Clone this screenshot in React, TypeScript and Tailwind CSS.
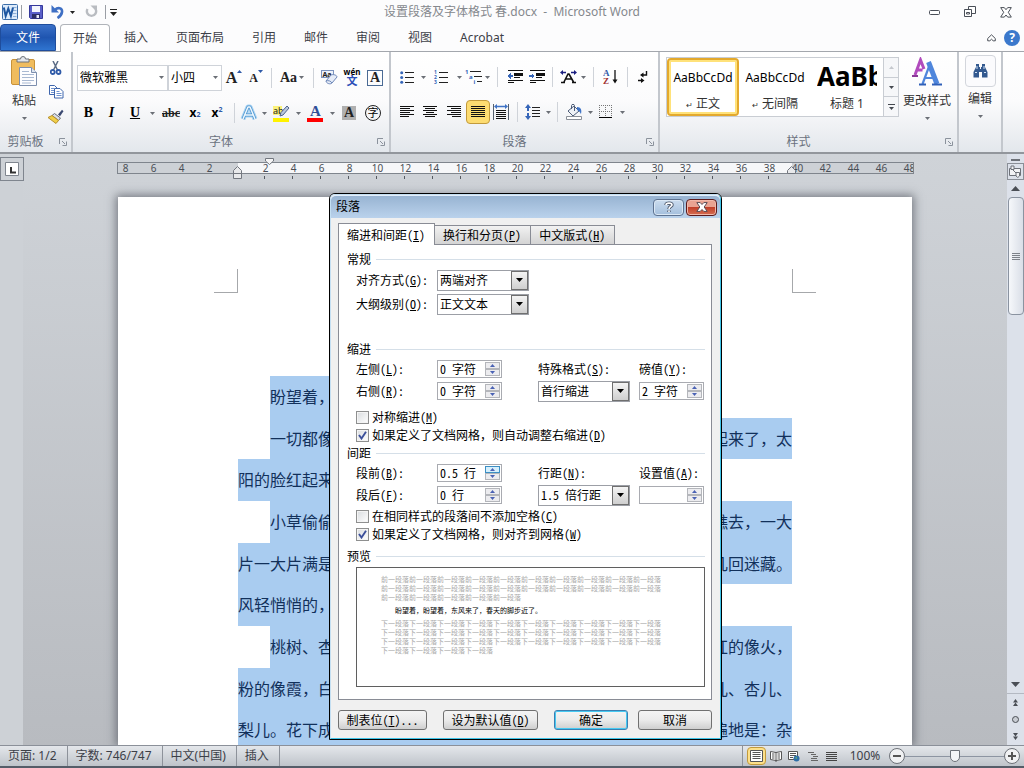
import React from 'react';

const UI_FONT = 'font-["Noto_Sans","Noto_Sans_CJK_SC",sans-serif]';
const DIALOG_FONT = 'font-["Noto_Sans_Mono_CJK_SC","Noto_Sans_CJK_SC",monospace]';

const TABS = ['插入', '页面布局', '引用', '邮件', '审阅', '视图', 'Acrobat'];

const RULER = [8, 6, 4, 2, 0, ...Array.from({ length: 24 }, (_, i) => (i + 1) * 2)];

type Line = { left: string; right?: string; indent?: boolean };

const LINES: Line[] = [
  { left: '盼望着，', indent: true },
  { left: '一切都像', right: '起来了，太', indent: true },
  { left: '阳的脸红起来' },
  { left: '小草偷偷', right: '瞧去，一大', indent: true },
  { left: '片一大片满是', right: '几回迷藏。' },
  { left: '风轻悄悄的，' },
  { left: '桃树、杏', right: '红的像火，', indent: true },
  { left: '粉的像霞，白', right: '儿、杏儿、' },
  { left: '梨儿。花下成', right: '遍地是：杂' },
];

/* ---------- small pieces ---------- */

const Caret: React.FC<{ className?: string }> = ({ className = 'text-[#6b6f76]' }) => (
  <svg width="5" height="3" viewBox="0 0 5 3" className={className} aria-hidden="true">
    <path d="M0 0h5L2.500 3z" fill="currentColor" />
  </svg>
);

const Tool: React.FC<{ label: string; className: string; children: React.ReactNode }> = ({ label, className, children }) => (
  <button type="button" aria-label={label} className={`flex h-6 shrink-0 items-center justify-center ${className}`}>
    {children}
  </button>
);

const Drop: React.FC<{ label: string; wide?: boolean }> = ({ label, wide }) => (
  <button type="button" aria-label={label} className={`flex h-6 shrink-0 items-center justify-center ${wide ? 'w-2.5' : 'w-2'}`}>
    <Caret />
  </button>
);

const Sep: React.FC<{ wide?: boolean }> = ({ wide }) => (
  <span className={`flex h-5 shrink-0 justify-center ${wide ? 'w-3' : 'w-2.5'}`}>
    <span className="w-px bg-[#cfd3d9]" />
  </span>
);

const Group: React.FC<{ title: string; className: string; launcher?: boolean; children: React.ReactNode }> = ({
  title,
  className,
  launcher = true,
  children,
}) => (
  <section className={`flex shrink-0 flex-col border-r-2 border-[#c3c7cd] ${className}`}>
    <div className="min-h-0 flex-1">{children}</div>
    <div className="flex h-5 items-center pr-1 text-xs leading-5 text-[#6a727e]">
      <span className="flex-1 pr-2 text-center">{title}</span>
      {launcher && (
        <button type="button" aria-label={`${title}对话框`}>
          <svg width="8" height="8" viewBox="0 0 8 8" fill="none" stroke="#8b929c">
            <path d="M.5 6V.5H6M3 3l3 3M7.500 3.500v4h-4" />
          </svg>
        </button>
      )}
    </div>
  </section>
);

const Bars: React.FC<{ rows: [number, number][] }> = ({ rows }) => (
  <svg width="15" height="13" viewBox="0 0 15 13" stroke="#111" shapeRendering="crispEdges" aria-hidden="true">
    {rows.map(([a, b], i) => (
      <path key={i} d={`M${a} ${i * 2 + 0.5}H${b}`} />
    ))}
  </svg>
);

/* ---------- title bar ---------- */

const TitleBar: React.FC = () => (
  <header className="grid h-6 grid-cols-[1fr_auto_1fr] items-center bg-[#fcfcfd]">
    <div className="flex items-center pl-0.5">
      <svg width="16" height="16" viewBox="0 0 16 16" aria-hidden="true">
        <rect x=".5" y=".5" width="15" height="15" rx="1" fill="#dceafa" stroke="#3a6ca8" />
        <path d="M11 3.500h3.500M11 6.500h3.500M11 9.500h3.500M11 12.500h3.500" stroke="#8fb0d8" />
        <path d="M1.800 3.500l1.900 8.500 2.600-7.500 2.600 7.500 2.100-8.500" fill="none" stroke="#1c55a0" strokeWidth="2" />
      </svg>
      <span className="ml-[3px] h-3.5 w-px bg-[#9a9ea5]" />
      <button type="button" aria-label="保存" className="ml-[7px]">
        <svg width="14" height="14" viewBox="0 0 14 14">
          <path d="M.5.5h13v13h-12l-1-1z" fill="#5a5fc8" stroke="#34389a" />
          <path d="M3 1h8v6H3z" fill="#f3f5fc" />
          <path d="M3 9h8v4.500H3z" fill="#2c2f66" />
          <path d="M7.500 10h2.500v3H7.500z" fill="#e8eaf6" />
        </svg>
      </button>
      <button type="button" aria-label="撤消" className="ml-2">
        <svg width="14" height="14" viewBox="0 0 14 14" fill="none">
          <path d="M4 5C6.500 2 11.500 2.500 11 7c-.3 2.800-2 4.500-4.500 6" stroke="#3e6fc4" strokeWidth="2.600" />
          <path d="M.5 0v7.500H8z" fill="#3e6fc4" />
        </svg>
      </button>
      <span className="ml-1 p-px"><Caret className="text-[#222]" /></span>
      <button type="button" aria-label="重复" className="ml-2">
        <svg width="14" height="14" viewBox="0 0 14 14" fill="none">
          <path d="M3.500 4a4.600 4.600 0 1 0 8 0" stroke="#b9bcc1" strokeWidth="2.400" />
          <path d="M6.500.5H13V7z" fill="#b9bcc1" />
        </svg>
      </button>
      <span className="ml-[7px] h-3.5 w-px bg-[#9a9ea5]" />
      <button type="button" aria-label="自定义快速访问工具栏" className="ml-1">
        <svg width="7" height="7" viewBox="0 0 7 7">
          <path d="M0 0h7v1H0zM0 3h7L3.500 7z" fill="#222" />
        </svg>
      </button>
    </div>
    <h1 className="whitespace-pre text-xs text-[#85888d]">设置段落及字体格式 春.docx  -  Microsoft Word</h1>
    <div className="flex items-center justify-end gap-6 pr-3 text-[#4a4f58]">
      <button type="button" aria-label="最小化">
        <svg width="11" height="12" viewBox="0 0 11 12" fill="#fff" stroke="currentColor"><rect x=".5" y="4.500" width="10" height="4" rx="1" /></svg>
      </button>
      <button type="button" aria-label="还原">
        <svg width="12" height="12" viewBox="0 0 12 12" fill="#fff" stroke="currentColor">
          <path d="M4.500.500h7v7h-7z" />
          <path d="M.5 3.500h7v7h-7z" />
          <path d="M2.500 6.500h3v1.500h-3z" />
        </svg>
      </button>
      <button type="button" aria-label="关闭">
        <svg width="12" height="11" viewBox="0 0 12 11" fill="#fff" stroke="currentColor">
          <path d="M.7.600h3.600L6 2.700 7.700.600h3.600L8.300 5.300l3 4.800H7.700L6 8l-1.700 2.100H.7l3-4.800z" />
        </svg>
      </button>
    </div>
  </header>
);

const TabRow: React.FC = () => (
  <nav className="flex h-7 items-stretch border-b border-[#a3a7ad] bg-[#fcfcfd] text-xs text-[#3c4048]">
    <button type="button" className="w-14 rounded-t-sm border border-[#1f4d9c] bg-linear-to-b from-[#3a70c8] via-[#1f55b0] to-[#2f74d0] text-white">
      文件
    </button>
    <button type="button" className="-mb-px ml-1 rounded-t border border-b-0 border-[#b0b4ba] bg-white px-3">开始</button>
    {TABS.map((tab) => (
      <button key={tab} type="button" className="px-3.5">{tab}</button>
    ))}
    <div className="ml-auto flex items-center gap-2 pr-1">
      <button type="button" aria-label="功能区最小化">
        <svg width="9" height="8" viewBox="0 0 9 8" fill="#fff" stroke="#4a4f58">
          <path d="M.7 4.500L4.500.800l3.800 3.700v2.300H6.200L4.500 5.200 2.800 6.800H.7z" />
        </svg>
      </button>
      <button type="button" aria-label="帮助" className="size-4 rounded-full bg-[#3b78cc] text-xs font-bold leading-4 text-white">?</button>
    </div>
  </nav>
);

/* ---------- ribbon ---------- */

const Clipboard: React.FC = () => (
  <div className="flex pt-1">
    <button type="button" className="flex w-12 flex-col items-center text-xs text-[#333]">
      <svg width="28" height="31" viewBox="0 0 28 31" aria-hidden="true">
        <rect x="1.500" y="3.500" width="23" height="25" rx="1.500" fill="#f0bc5e" stroke="#c8923a" />
        <path d="M7 6V3h3.500a2.500 2.500 0 0 1 5 0H19v3z" fill="#e4e7ec" stroke="#6c7178" />
        <path d="M9.500 11.500h12l5 5v13h-17z" fill="#fdfdff" stroke="#7d8fae" />
        <path d="M21.500 11.500v5h5" fill="#dce4f0" stroke="#7d8fae" />
        <path d="M12 15.500h7M12 18.500h12M12 21.500h12M12 24.500h12M12 27h9" stroke="#a9b9d2" />
      </svg>
      <span className="mt-1 leading-5">粘贴</span>
      <span className="mt-1.5"><Caret /></span>
    </button>
    <div className="flex flex-col items-center">
      <Tool label="剪切" className="w-4">
        <svg width="12" height="14" viewBox="0 0 12 14" fill="none">
          <path d="M3 0l4.500 9M8 0L3.500 9" stroke="#5a6b86" strokeWidth="1.500" />
          <circle cx="2.700" cy="11" r="2" stroke="#2f5aa8" strokeWidth="1.800" />
          <circle cx="8.500" cy="11" r="2" stroke="#2f5aa8" strokeWidth="1.800" />
        </svg>
      </Tool>
      <Tool label="复制" className="w-4">
        <svg width="15" height="14" viewBox="0 0 15 14" fill="#fff" stroke="#3f66ad">
          <path d="M.5.5h5l2.500 2.500v6.500H.5z" />
          <path d="M2 3.500h3M2 5.500h4M2 7.500h4" stroke="#6f93d0" />
          <path d="M5.500 3.500h5.500l3 3v6.500H5.500z" />
          <path d="M7.500 6.500h3M7.500 8.500h5M7.500 10.500h5" stroke="#6f93d0" />
        </svg>
      </Tool>
      <Tool label="格式刷" className="w-4">
        <svg width="16" height="15" viewBox="0 0 16 15">
          <path d="M10 5.500L14 .800l1.500 1.400-3.500 5z" fill="#3c4a72" />
          <path d="M6.500 4.500l6 4.500-2 2.500-6.500-5z" fill="#d9dde6" stroke="#6b7079" />
          <path d="M4 6.500l6.500 5L8 14.500 0 8.500z" fill="#f0cf4a" stroke="#b8902a" />
        </svg>
      </Tool>
    </div>
  </div>
);

const SERIF = 'font-["Liberation_Serif",serif]';

const FontGroup: React.FC = () => (
  <div className="flex flex-col gap-1.5 pl-1 pt-3">
    <div className="flex items-center">
      <div className="relative">
        <select aria-label="字体" className="h-[26px] w-[91px] appearance-none border border-[#cfd3d9] bg-white pl-0.5 text-xs text-black">
          <option>微软雅黑</option>
        </select>
        <span className="pointer-events-none absolute right-1 top-3"><Caret /></span>
      </div>
      <div className="relative">
        <select aria-label="字号" className="h-[26px] w-[54px] appearance-none border border-[#cfd3d9] bg-white pl-0.5 text-xs text-black">
          <option>小四</option>
        </select>
        <span className="pointer-events-none absolute right-1 top-3"><Caret /></span>
      </div>
      <Tool label="增大字体" className={`w-6 text-base font-bold text-[#222] ${SERIF}`}>
        A<svg width="5" height="3" viewBox="0 0 5 3" className="mb-3"><path d="M0 3h5L2.500 0z" fill="#2f5aa8" /></svg>
      </Tool>
      <Tool label="缩小字体" className={`w-5 text-xs font-bold text-[#222] ${SERIF}`}>
        A<svg width="5" height="3" viewBox="0 0 5 3" className="mb-3"><path d="M0 0h5L2.500 3z" fill="#2f5aa8" /></svg>
      </Tool>
      <Sep />
      <Tool label="更改大小写" className={`w-8 gap-0.5 text-sm font-bold text-[#222] ${SERIF}`}>
        Aa<Caret />
      </Tool>
      <Sep />
      <Tool label="清除格式" className="w-[22px]">
        <svg width="17" height="17" viewBox="0 0 17 17">
          <rect x=".5" y="1.500" width="12" height="7" fill="#eef2fa" stroke="#7c94bf" />
          <text x="1.500" y="7.500" fontSize="7" fontWeight="bold" fill="#222">Aa</text>
          <path d="M5 12l5-6c2-1 6 0 6 2l-5 6c-2 2-6 0-6-2z" fill="#e7edf8" stroke="#6d87b8" />
          <path d="M5 12c2-1 5 0 6 2" fill="none" stroke="#6d87b8" />
        </svg>
      </Tool>
      <Tool label="拼音指南" className="w-6">
        <span className="flex flex-col items-center">
          <span className="text-[8px] font-bold leading-[6px] text-black">wén</span>
          <span className="text-[11px] font-bold leading-[11px] text-[#2b4fb8]">文</span>
        </span>
      </Tool>
      <Tool label="字符边框" className="w-[22px]">
        <span className={`size-4 border border-[#4a6a94] text-sm font-bold leading-[14px] text-[#222] ${SERIF}`}>A</span>
      </Tool>
    </div>
    <div className="flex h-8 items-center">
      <Tool label="加粗" className={`w-[23px] text-sm font-bold text-black ${SERIF}`}>B</Tool>
      <Tool label="倾斜" className={`w-[23px] text-sm font-bold italic text-black ${SERIF}`}>I</Tool>
      <Tool label="下划线" className={`w-6 text-sm font-bold text-black underline ${SERIF}`}>U</Tool>
      <Drop label="下划线样式" wide />
      <Tool label="删除线" className={`w-7 text-xs font-bold text-[#222] line-through ${SERIF}`}>abc</Tool>
      <Tool label="下标" className="w-5 text-xs font-bold text-black">x<sub className="text-[7px] text-[#2f5aa8]">2</sub></Tool>
      <Tool label="上标" className="w-6 text-xs font-bold text-black">x<sup className="text-[7px] text-[#2f5aa8]">2</sup></Tool>
      <Sep />
      <Tool label="文本效果" className="w-5">
        <svg width="18" height="18" viewBox="0 0 18 18" fill="none" strokeLinejoin="round">
          <path d="M3 15L8 3h2l5 12M5 11h8" stroke="#a9d3f2" strokeWidth="5" />
          <path d="M3 15L8 3h2l5 12M5 11h8" stroke="#4b93cf" strokeWidth="3" />
          <path d="M3 15L8 3h2l5 12M5 11h8" stroke="#eef7fd" strokeWidth="1.500" />
        </svg>
      </Tool>
      <Drop label="文本效果选项" wide />
      <Tool label="突出显示" className="w-6">
        <svg width="17" height="17" viewBox="0 0 17 17">
          <path d="M0 1h9v9H0z" fill="#fbf27a" />
          <text x="0" y="8.500" fontSize="9" fill="#222">ab</text>
          <path d="M14 1l2 2-6 7-3 1 1-3.500z" fill="#b9c7de" stroke="#50648c" />
          <path d="M0 13h16v4H0z" fill="#fff200" />
        </svg>
      </Tool>
      <Drop label="突出显示颜色" wide />
      <Tool label="字体颜色" className="w-6">
        <svg width="17" height="18" viewBox="0 0 17 18">
          <text x="3" y="12" fontSize="15" fontWeight="bold" fontFamily="Liberation Serif" fill="#2f4f98">A</text>
          <path d="M0 14h16v4H0z" fill="#f00" />
        </svg>
      </Tool>
      <Drop label="字体颜色选项" wide />
      <Tool label="字符底纹" className="w-6">
        <span className={`size-3.5 bg-[#b0b0b0] text-sm font-bold leading-[14px] text-[#222] ${SERIF}`}>A</span>
      </Tool>
      <Tool label="带圈字符" className="w-6">
        <span className="size-4 rounded-full border border-[#222] text-[11px] leading-[14px] text-black">字</span>
      </Tool>
    </div>
  </div>
);

const FULL: [number, number][] = [[0, 14], [0, 14], [0, 14], [0, 14], [0, 14], [0, 14]];

const IndentIcon: React.FC<{ out?: boolean }> = ({ out }) => (
  <svg width="16" height="14" viewBox="0 0 16 14" fill="none" shapeRendering="crispEdges">
    <path d="M1 .500h15M7 3h9M7 7h6M1 10.500h15M1 12.500h6" stroke="#111" />
    <path d="M7 4.500h9" stroke="#111" strokeWidth="2" />
    <path d={out ? 'M0 6l3.500-3v2H6v2H3.500v2z' : 'M6 6L2.500 3v2H0v2h2.500v2z'} fill="#3565b8" />
  </svg>
);

const ParagraphGroup: React.FC = () => (
  <div className="flex flex-col gap-1.5 pl-1 pt-3">
    <div className="flex h-[26px] items-center">
      <Tool label="项目符号" className="w-6">
        <svg width="14" height="13" viewBox="0 0 14 13">
          <path d="M5 1.500h9M5 6.500h9M5 11.500h9" stroke="#222" />
          <g fill="#3565b8"><circle cx="1.700" cy="1.700" r="1.500" /><circle cx="1.700" cy="6.500" r="1.500" /><circle cx="1.700" cy="11.300" r="1.500" /></g>
        </svg>
      </Tool>
      <Drop label="项目符号库" />
      <Tool label="编号" className="w-7">
        <svg width="15" height="15" viewBox="0 0 15 15">
          <path d="M5 2.500h9M5 7.500h9M5 12.500h9" stroke="#222" />
          <g fill="#3565b8" fontSize="5" fontWeight="bold"><text x="0" y="4.300">1</text><text x="0" y="9.300">2</text><text x="0" y="14.300">3</text></g>
        </svg>
      </Tool>
      <Drop label="编号库" />
      <Tool label="多级列表" className="w-5">
        <svg width="17" height="16" viewBox="0 0 17 16">
          <path d="M5 2.500h11M9 7.500h8M12 12.500h5" stroke="#222" />
          <g fill="#3565b8" fontSize="6" fontWeight="bold"><text x="0" y="4.700">1</text><text x="4" y="9.700">a</text><text x="8.500" y="15">i</text></g>
        </svg>
      </Tool>
      <Drop label="列表库" />
      <Sep wide />
      <Tool label="减少缩进量" className="w-6"><IndentIcon out /></Tool>
      <Tool label="增加缩进量" className="w-5"><IndentIcon /></Tool>
      <Sep />
      <Tool label="中文版式" className="w-[22px]">
        <svg width="17" height="14" viewBox="0 0 17 14" fill="none">
          <path d="M1 12.500h4M12 12.500h4M4 12L8 4h1l4.500 8M6 9h6" stroke="#111" strokeWidth="1.600" />
          <path d="M0 2.500L3 0v1.700h3v1.600H3V5zM17 2.500L14 0v1.700h-3v1.600h3V5z" fill="#1b1f80" />
        </svg>
      </Tool>
      <Drop label="中文版式选项" />
      <Sep wide />
      <Tool label="排序" className="w-[22px]">
        <svg width="15" height="16" viewBox="0 0 15 16">
          <text x="0" y="7" fontSize="9" fontWeight="bold" fontFamily="Liberation Serif" fill="#2f5aa8">A</text>
          <text x="0" y="15" fontSize="9" fontWeight="bold" fontFamily="Liberation Serif" fill="#a03030">Z</text>
          <path d="M12 1v11" stroke="#111" strokeWidth="1.300" />
          <path d="M9.500 10.500h5l-2.500 4z" fill="#111" />
        </svg>
      </Tool>
      <Sep wide />
      <Tool label="显示编辑标记" className="w-5">
        <svg width="12" height="13" viewBox="0 0 12 13" fill="none" stroke="#111" strokeWidth="1.400">
          <path d="M9.500 0v4H5M1 9.500h5" />
          <path d="M6.500 1.500v5L3 4zM4 7v5l3.500-2.500z" fill="#111" stroke="none" />
        </svg>
      </Tool>
    </div>
    <div className="flex h-8 items-center">
      <Tool label="左对齐" className="w-6"><Bars rows={[[0, 14], [0, 10], [0, 14], [0, 10], [0, 14], [0, 9]]} /></Tool>
      <Tool label="居中" className="w-[23px]"><Bars rows={[[0, 14], [2, 12], [0, 14], [3, 11], [0, 14], [2, 12]]} /></Tool>
      <Tool label="右对齐" className="w-6"><Bars rows={[[0, 14], [4, 14], [0, 14], [4, 14], [0, 14], [5, 14]]} /></Tool>
      <Tool label="两端对齐" className="w-6 rounded-sm border border-[#c29a3c] bg-[#fddc71]"><Bars rows={FULL} /></Tool>
      <Tool label="分散对齐" className="w-[22px]">
        <svg width="16" height="16" viewBox="0 0 16 16">
          <path d="M.5 0v16M15.500 0v16" stroke="#55606f" />
          <path d="M3 6.500h10M3 8.500h10M3 10.500h10M3 12.500h10M3 14.500h10" stroke="#111" shapeRendering="crispEdges" />
          <path d="M1 2.500L4 0v1.700h8V0l3 2.500L12 5V3.300H4V5z" fill="#3f73c6" />
        </svg>
      </Tool>
      <Sep />
      <Tool label="行距" className="w-[22px]">
        <svg width="16" height="16" viewBox="0 0 16 16">
          <path d="M7 3.500h8M7 6.500h8M7 9.500h8M7 12.500h8" stroke="#222" />
          <path d="M3 0l3 4H4v3H2V4H0zM3 16l3-4H4V9H2v3H0z" fill="#3565b8" />
        </svg>
      </Tool>
      <Drop label="行距选项" />
      <Sep />
      <Tool label="底纹" className="w-6">
        <svg width="17" height="16" viewBox="0 0 17 16">
          <path d="M2 7l6-5 5 5-6 5z" fill="#eef1f6" stroke="#4e5d78" />
          <path d="M5.500 5V1.500c0-1.500 3-1.500 3 0V7" fill="none" stroke="#4e5d78" />
          <path d="M11 3c4 0 5 3 4 7-1-1-1-3-4-4z" fill="#3f73c6" />
          <path d="M.5 12.500h15v3H.5z" fill="#fff" stroke="#8a8f98" />
        </svg>
      </Tool>
      <Drop label="底纹颜色" />
      <Tool label="下框线" className="w-6">
        <svg width="14" height="14" viewBox="0 0 14 14" shapeRendering="crispEdges">
          <path d="M0 .5h13M0 6.500h13M.5 0v12M6.500 0v12M12.500 0v12" stroke="#777" strokeDasharray="1 1" />
          <path d="M0 12.500h13" stroke="#000" />
        </svg>
      </Tool>
      <Drop label="框线选项" />
    </div>
  </div>
);

const StylesGroup: React.FC = () => (
  <div className="flex pl-1.5 pt-[5px] text-xs text-[#333]">
    <div className="flex h-[60px] border border-[#c9cdd3] bg-white">
      <button type="button" className="flex w-[72px] flex-col items-center overflow-hidden rounded-sm border-2 border-[#e3a92d] bg-white pt-2.5 ring-2 ring-inset ring-[#ffe27a]">
        <span className="leading-4 text-black">AaBbCcDd</span>
        <span className="mt-2.5 leading-4"><span className="text-[8px]">↵</span> 正文</span>
      </button>
      <button type="button" className="flex w-[72px] flex-col items-center overflow-hidden pt-3">
        <span className="leading-4 text-black">AaBbCcDd</span>
        <span className="mt-2.5 leading-4"><span className="text-[8px]">↵</span> 无间隔</span>
      </button>
      <button type="button" className="flex w-[72px] flex-col items-center pt-1">
        <span className="w-[60px] overflow-hidden text-[26px] font-bold leading-7 text-black">AaBb</span>
        <span className="mt-1.5 leading-4">标题 1</span>
      </button>
      <div className="flex w-[15px] flex-col divide-y divide-[#c9cdd3] border-l border-[#c9cdd3] bg-[#f6f7f9]">
        <button type="button" aria-label="上一行" className="flex flex-1 items-center justify-center"><span className="rotate-180"><Caret className="text-[#c5c8cd]" /></span></button>
        <button type="button" aria-label="下一行" className="flex flex-1 items-center justify-center"><Caret className="text-[#44484f]" /></button>
        <button type="button" aria-label="其他" className="flex flex-1 flex-col items-center justify-center gap-0.5">
          <span className="h-px w-[7px] bg-[#44484f]" />
          <Caret className="text-[#44484f]" />
        </button>
      </div>
    </div>
    <button type="button" className="flex w-14 flex-col items-center whitespace-nowrap">
      <svg width="30" height="30" viewBox="0 0 30 30" fill="none" aria-hidden="true">
        <path d="M3 18L8.500 3l3.500 9M4.500 13h6" stroke="#b14bbd" strokeWidth="3" />
        <path d="M0 19h6" stroke="#8b3a98" strokeWidth="2" />
        <path d="M10.500 27L18 7M13 21h10" stroke="#4f86dc" strokeWidth="2.200" />
        <path d="M16.500 5l8.500 22" stroke="#4f86dc" strokeWidth="5" />
        <path d="M7 27.500h7M20 27.500h10" stroke="#2f5fb8" strokeWidth="2" />
      </svg>
      <span className="mt-1 leading-5">更改样式</span>
      <span className="mt-1.5"><Caret /></span>
    </button>
  </div>
);

const Ribbon: React.FC = () => (
  <div className="flex h-[102px] border-b-2 border-[#92969c] bg-linear-to-b from-white via-[#fbfbfc] to-[#e3e7ec]">
    <Group title="剪贴板" className="w-[73px]"><Clipboard /></Group>
    <Group title="字体" className="w-[318px]"><FontGroup /></Group>
    <Group title="段落" className="w-[269px]"><ParagraphGroup /></Group>
    <Group title="样式" className="w-[299px]"><StylesGroup /></Group>
    <Group title="" launcher={false} className="w-[44px]">
      <button type="button" className="mx-auto flex flex-col items-center pt-[3px] text-xs text-[#333]">
        <span className="flex h-8 w-[31px] items-center justify-center rounded-sm border border-[#d3d6dc] bg-[#fbfbfd]">
          <svg width="15" height="14" viewBox="0 0 15 14">
            <path d="M3 0h3v3h1v2h1V3h1V0h3v3l2.500 5v5.500H9V8H6v5.500H.5V8L3 3z" fill="#33598f" />
            <path d="M2 8.500h2M11 8.500h2M4 2v3M11 2v3" stroke="#cfe0f4" />
          </svg>
        </span>
        <span className="mt-0.5 leading-5">编辑</span>
        <span className="mt-1.5"><Caret /></span>
      </button>
    </Group>
  </div>
);

/* ---------- document ---------- */

const Ruler: React.FC = () => (
  <div className="relative mx-auto mt-2 w-[797px] shrink-0">
    <div className="h-3 overflow-hidden border border-[#7f858d] bg-[linear-gradient(to_right,#cdd1d6_120px,#f6f7f9_120px,#f6f7f9_674px,#cdd1d6_674px)]">
      <div className="-ml-1.5 flex">
        {RULER.map((n, i) => (
          <span key={i} className="w-7 shrink-0 text-center text-[10px] leading-[10px] text-[#4a4e55]">{n || ''}</span>
        ))}
      </div>
    </div>
    <div className="-ml-1.5 mt-0.5 flex h-[3px] overflow-hidden">
      {RULER.map((_, i) => (
        <span key={i} className="flex w-7 shrink-0 justify-center">
          {i > 4 && i < 24 && <span className="w-px bg-[#555a61]" />}
        </span>
      ))}
    </div>
    <svg width="9" height="18" viewBox="0 0 9 18" className="absolute left-[116px] top-1" fill="#e8e9eb" stroke="#72777f">
      <path d="M.5 7.500v-3l4-4 4 4v3zM.5 7.500h8v5h-8z" />
    </svg>
    <svg width="9" height="7" viewBox="0 0 9 7" className="absolute -top-1 left-[148px]" fill="#f4f4f5" stroke="#72777f">
      <path d="M.5.500h8v2.500l-4 3.500-4-3.500z" />
    </svg>
    <svg width="9" height="8" viewBox="0 0 9 8" className="absolute left-[670px] top-1" fill="#e8e9eb" stroke="#72777f">
      <path d="M.5 7.500v-3l4-4 4 4v3z" />
    </svg>
  </div>
);

const Page: React.FC = () => (
  <article className="mx-auto mt-[18px] w-[794px] flex-1 overflow-hidden bg-white shadow-[0_0_9px_2px_rgba(70,75,85,0.65)]">
    <div className="flex justify-between px-24 pt-[72px]">
      <span className="size-6 border-b border-r border-[#a6a8ab]" />
      <span className="size-6 border-b border-l border-[#a6a8ab]" />
    </div>
    <div className={`mx-[120px] mt-[83px] flex h-[375px] flex-col text-base text-[#12305a] ${UI_FONT}`}>
      {LINES.map((line) => (
        <p
          key={line.left}
          className={`flex min-h-0 flex-1 items-center justify-between whitespace-nowrap bg-[#a9ccf0] ${line.indent ? 'ml-8' : ''} ${line.right ? '' : 'w-64'}`}
        >
          <span>{line.left}</span>
          <span>{line.right}</span>
        </p>
      ))}
    </div>
  </article>
);

const Scrollbar: React.FC = () => (
  <div className="flex w-[17px] shrink-0 flex-col items-center bg-[#dce1ea] pt-[5px] text-[#4a4e55]">
    <span className="h-0.5 w-[9px] bg-[#6d7178]" />
    <button type="button" aria-label="标尺" className="mt-0.5 flex h-[17px] w-[17px] items-center justify-center border border-[#8a8f97]">
      <svg width="13" height="13" viewBox="0 0 13 13" fill="#f2f3f5" stroke="#6d7178">
        <path d="M.5 3.500h11v7H.5z" />
        <path d="M2 1h3v3.500H2zM7 7.500h3.500V11L8.800 12.500 7 11z" />
        <path d="M4 5l3 3" />
      </svg>
    </button>
    <button type="button" aria-label="向上滚动" className="flex h-[17px] items-center">
      <svg width="9" height="5" viewBox="0 0 9 5"><path d="M0 5h9L4.500 0z" fill="currentColor" /></svg>
    </button>
    <div className="flex h-[118px] w-4 flex-col items-center justify-center gap-px rounded-sm border border-[#8a93a0] bg-linear-to-r from-[#f6f8fb] to-[#d9dee7]">
      {[0, 1, 2, 3].map((i) => (
        <span key={i} className="h-px w-2 bg-[#7d828a]" />
      ))}
    </div>
    <div className="flex-1" />
    <button type="button" aria-label="向下滚动" className="flex h-[17px] items-center">
      <svg width="9" height="5" viewBox="0 0 9 5"><path d="M0 0h9L4.500 5z" fill="currentColor" /></svg>
    </button>
    <div className="flex h-[52px] w-full flex-col items-center justify-around border-t border-[#b4b9c2]">
      <button type="button" aria-label="上一页"><svg width="7" height="7" viewBox="0 0 7 7"><path d="M1 3.500h5L3.500 0zM1 7h5L3.500 3.500z" fill="currentColor" /></svg></button>
      <button type="button" aria-label="选择浏览对象"><svg width="7" height="7" viewBox="0 0 7 7" fill="#c9cdd4" stroke="currentColor"><circle cx="3.500" cy="3.500" r="3" /></svg></button>
      <button type="button" aria-label="下一页"><svg width="7" height="7" viewBox="0 0 7 7"><path d="M1 0h5L3.500 3.500zM1 3.500h5L3.500 7z" fill="currentColor" /></svg></button>
    </div>
  </div>
);

const Workspace: React.FC = () => (
  <main className="flex min-h-0 flex-1 bg-linear-to-b from-[#cfd3d8] to-[#b8bbc0]">
    <div className="w-[23px] shrink-0 bg-[#cdd1d6] pt-[3px]">
      <button type="button" aria-label="制表符" className="flex h-6 w-6 items-center justify-center border border-[#7f858e]">
        <svg width="14" height="14" viewBox="0 0 14 14">
          <path d="M.5.500h13v13H.5z" fill="#fff" stroke="#7f858e" />
          <path d="M6 5v5.500h5" stroke="#333" strokeWidth="2" fill="none" />
        </svg>
      </button>
    </div>
    <div className="flex min-w-0 flex-1 flex-col overflow-hidden">
      <Ruler />
      <Page />
    </div>
    <Scrollbar />
  </main>
);

const StatusBar: React.FC = () => (
  <footer className="flex h-[23px] items-stretch border-b-2 border-t border-b-[#555d68] border-t-[#8b9099] bg-linear-to-b from-[#e4e7eb] to-[#bfc4ca] text-xs text-[#3c4048]">
    {['页面: 1/2', '字数: 746/747', '中文(中国)', '插入'].map((text) => (
      <span key={text} className="flex items-center border-r border-[#8d929a] pl-2 pr-2.5 leading-4">{text}</span>
    ))}
    <div className="ml-auto flex items-center border-l border-[#8d929a] pl-1">
      <button type="button" aria-label="页面视图" className="flex h-[18px] w-[19px] items-center justify-center rounded-sm border border-[#c29a3c] bg-[#fde08a]">
        <svg width="13" height="12" viewBox="0 0 13 12"><path d="M.5.500h12v11H.5z" fill="#fff" stroke="#555" /><path d="M2.500 2.500h8M2.500 4.500h8M2.500 6.500h8M2.500 8.500h8" stroke="#555" /></svg>
      </button>
      <button type="button" aria-label="阅读版式" className="ml-1">
        <svg width="12" height="12" viewBox="0 0 12 12" fill="#fff" stroke="#555"><path d="M.5 1.500l5.500 1 5.500-1v8l-5.500 1-5.500-1zM6 2.500V12M2 4h2.500M2 6h2.500M2 8h2.500M7.500 4H10M7.500 6H10M7.500 8H10" /></svg>
      </button>
      <button type="button" aria-label="Web版式" className="ml-1.5">
        <svg width="12" height="12" viewBox="0 0 12 12"><path d="M.5 1.500h9v8h-9z" fill="#fff" stroke="#555" /><path d="M2 3.500h6M2 5.500h6M2 7.500h3" stroke="#555" /><circle cx="8.500" cy="8.500" r="3" fill="#2d6ea8" /><path d="M7 8l1.500-1.500L9 9z" fill="#6db36d" /></svg>
      </button>
      <button type="button" aria-label="大纲" className="ml-2">
        <svg width="10" height="11" viewBox="0 0 10 11" stroke="#666"><path d="M0 1.500h6M3 3.500h5M5 5.500h5M3 7.500h6M3 9.500h7" /></svg>
      </button>
      <button type="button" aria-label="草稿" className="ml-2">
        <svg width="11" height="11" viewBox="0 0 11 11" stroke="#444" shapeRendering="crispEdges"><path d="M0 1.500h11M0 3.500h11M0 5.500h11M0 7.500h11M0 9.500h11" /></svg>
      </button>
      <span className="ml-2.5 w-9 text-center leading-4">100%</span>
      <button type="button" aria-label="缩小" className="ml-1.5 flex size-4 items-center justify-center rounded-full border border-[#6d7178] bg-[#f0f1f3]">
        <span className="h-0.5 w-2 bg-[#555]" />
      </button>
      <input
        type="range"
        aria-label="显示比例"
        defaultValue={50}
        className="h-3.5 w-[99px] appearance-none bg-[linear-gradient(#8d95a2,#8d95a2)] bg-size-[100%_1px] bg-center bg-no-repeat [&::-webkit-slider-thumb]:h-3 [&::-webkit-slider-thumb]:w-2.5 [&::-webkit-slider-thumb]:appearance-none [&::-webkit-slider-thumb]:rounded-b-[5px] [&::-webkit-slider-thumb]:border [&::-webkit-slider-thumb]:border-[#6d7178] [&::-webkit-slider-thumb]:bg-[#f4f5f7]"
      />
      <button type="button" aria-label="放大" className="mr-1 flex size-4 items-center justify-center rounded-full border border-[#6d7178] bg-[#f0f1f3]">
        <svg width="8" height="8" viewBox="0 0 8 8"><path d="M3 0h2v3h3v2H5v3H3V5H0V3h3z" fill="#555" /></svg>
      </button>
    </div>
  </footer>
);

/* ---------- paragraph dialog ---------- */

const Key: React.FC<{ text: string; k: string; tail?: string }> = ({ text, k, tail = '' }) => (
  <>
    {text}(<u className="underline-offset-1">{k}</u>){tail}
  </>
);

const FieldLabel: React.FC<{ id: string; text: string; k: string }> = ({ id, text, k }) => (
  <label htmlFor={id} className="whitespace-nowrap"><Key text={text} k={k} tail=":" /></label>
);

const Combo: React.FC<{ id: string; value: string }> = ({ id, value }) => (
  <div className="relative w-[92px]">
    <select id={id} className="block h-[21px] w-full appearance-none border border-[#9c9fa6] bg-white pl-0.5 text-xs text-black">
      <option>{value}</option>
    </select>
    <span className="pointer-events-none absolute right-px top-px flex h-[19px] w-[17px] items-center justify-center border border-[#6f6f6f] bg-linear-to-b from-[#f4f4f4] to-[#cfcfcf]">
      <svg width="7" height="4" viewBox="0 0 7 4"><path d="M0 0h7L3.500 4z" fill="#000" /></svg>
    </span>
  </div>
);

const Spinner: React.FC<{ id: string; value: string; hot?: boolean }> = ({ id, value, hot }) => (
  <div className="flex h-[18px] w-[65px] border border-[#a9abb1] bg-white">
    <input id={id} type="text" defaultValue={value} className="w-0 flex-1 pl-0.5 text-xs leading-4 text-black outline-none" />
    <div className="flex w-4 flex-col justify-between py-px pr-px">
      <button type="button" aria-label="增加" className={`flex h-[7px] items-center justify-center border ${hot ? 'border-[#3c8fc4] bg-[#d5effc]' : 'border-[#b4b6bb] bg-[#ececef]'}`}>
        <svg width="5" height="3" viewBox="0 0 5 3"><path d="M0 3h5L2.500 0z" fill="#4a62b4" /></svg>
      </button>
      <button type="button" aria-label="减少" className="flex h-[7px] items-center justify-center border border-[#b4b6bb] bg-[#ececef]">
        <svg width="5" height="3" viewBox="0 0 5 3"><path d="M0 0h5L2.500 3z" fill="#4a62b4" /></svg>
      </button>
    </div>
  </div>
);

const Check: React.FC<{ text: string; k: string; checked?: boolean }> = ({ text, k, checked }) => (
  <label className="ml-[9px] flex h-[18px] items-center gap-[3px] whitespace-nowrap">
    <span className="relative flex size-[13px]">
      <input type="checkbox" defaultChecked={checked} className="peer size-[13px] appearance-none border border-[#8e8f8f] bg-linear-to-br from-[#d9dcdf] to-white ring-1 ring-inset ring-[#f4f4f4]" />
      <svg width="9" height="9" viewBox="0 0 9 9" className="pointer-events-none absolute left-0.5 top-0.5 hidden peer-checked:block">
        <path d="M1 4l2.500 3.500L8 .800" fill="none" stroke="#3b4f9a" strokeWidth="1.900" />
      </svg>
    </span>
    <span><Key text={text} k={k} /></span>
  </label>
);

const Heading: React.FC<{ children: string; className?: string }> = ({ children, className = '' }) => (
  <h3 className={`flex h-[18px] items-center gap-[5px] ${className}`}>
    {children}
    <span className="h-px flex-1 bg-[#d5dfe8]" />
  </h3>
);

const ROW = 'ml-[9px] grid grid-cols-[81px_101px_101px_65px] items-center';
const TAB = 'border border-b-0 border-[#898c95] pl-2 pr-[9px]';
const BTN = 'h-5 rounded-[3px] border bg-linear-to-b from-[#f4f4f4] via-[#ebebeb] to-[#cfcfcf]';

const ParagraphDialog: React.FC = () => (
  <div
    role="dialog"
    aria-label="段落"
    className={`absolute left-[329px] top-[193px] w-[393px] rounded-t-md border border-black bg-[#f0f0f0] text-xs leading-4 text-black ${DIALOG_FONT}`}
  >
    <div className="rounded-t-[5px] border border-[#c4dff2] border-b-[#3fc4e8] border-r-[#3fc4e8]">
      <div className="flex h-[23px] items-center rounded-t-[5px] border-t border-[#e3eefa] bg-linear-to-b from-[#98b4d2] to-[#bad2ec] pl-[5px] pr-[3px]">
        <h2 className={UI_FONT}>段落</h2>
        <button type="button" aria-label="帮助" className="ml-auto flex h-[17px] w-[31px] items-center justify-center rounded-sm border border-[#5d7290] bg-linear-to-b from-[#cbdcee] to-[#a4bfdd] ring-1 ring-inset ring-[#dbe8f5]">
          <svg width="10" height="12" viewBox="0 0 10 12" fill="none">
            <path d="M2 4C2 1.500 8 1.500 8 4c0 1.500-3 1.500-3 4M5 9.500v1.500" stroke="#4a5568" strokeWidth="3.400" />
            <path d="M2 4C2 1.500 8 1.500 8 4c0 1.500-3 1.500-3 4M5 9.500v1.500" stroke="#fff" strokeWidth="1.600" />
          </svg>
        </button>
        <button type="button" aria-label="关闭" className="ml-0.5 flex h-[17px] w-[31px] items-center justify-center rounded-sm border border-[#5c1a1c] bg-linear-to-b from-[#e9a392] from-45% via-[#c1402a] via-50% to-[#d56d52] ring-1 ring-inset ring-[#f0b8aa]">
          <svg width="12" height="10" viewBox="0 0 12 10" fill="#fff" stroke="#5a4a52">
            <path d="M.8.600h3.400L6 2.500 7.800.600h3.400L8.200 5l3 4.400H7.800L6 7.500 4.200 9.400H.8l3-4.400z" />
          </svg>
        </button>
      </div>

      <div className="px-[7px] pb-2 pt-[5px]">
        <div role="tablist" className="flex items-end">
          <button type="button" role="tab" aria-selected="true" className={`relative -mb-px h-[22px] bg-white ${TAB}`}>
            <Key text="缩进和间距" k="I" />
          </button>
          <button type="button" role="tab" aria-selected="false" className={`h-[19px] border-l-0 bg-linear-to-b from-[#f2f2f2] to-[#d4d4d4] ${TAB}`}>
            <Key text="换行和分页" k="P" />
          </button>
          <button type="button" role="tab" aria-selected="false" className={`h-[19px] border-l-0 bg-linear-to-b from-[#f2f2f2] to-[#d4d4d4] ${TAB}`}>
            <Key text="中文版式" k="H" />
          </button>
        </div>

        <div role="tabpanel" className="mr-px border border-[#898c95] bg-white pb-3 pl-2 pr-1.5 pt-[5px]">
          <Heading>常规</Heading>
          <div className={`h-6 ${ROW}`}>
            <FieldLabel id="align" text="对齐方式" k="G" />
            <Combo id="align" value="两端对齐" />
          </div>
          <div className={`h-6 ${ROW}`}>
            <FieldLabel id="outline" text="大纲级别" k="O" />
            <Combo id="outline" value="正文文本" />
          </div>

          <Heading className="mt-6">缩进</Heading>
          <div className={`h-[22px] ${ROW}`}>
            <FieldLabel id="left" text="左侧" k="L" />
            <Spinner id="left" value="0 字符" />
            <FieldLabel id="special" text="特殊格式" k="S" />
            <FieldLabel id="by" text="磅值" k="Y" />
          </div>
          <div className={`h-[22px] ${ROW}`}>
            <FieldLabel id="right" text="右侧" k="R" />
            <Spinner id="right" value="0 字符" />
            <Combo id="special" value="首行缩进" />
            <Spinner id="by" value="2 字符" />
          </div>
          <div className="mt-1.5">
            <Check text="对称缩进" k="M" />
            <Check text="如果定义了文档网格，则自动调整右缩进" k="D" checked />
          </div>

          <Heading>间距</Heading>
          <div className={`h-[22px] ${ROW}`}>
            <FieldLabel id="before" text="段前" k="B" />
            <Spinner id="before" value="0.5 行" hot />
            <FieldLabel id="spacing" text="行距" k="N" />
            <FieldLabel id="at" text="设置值" k="A" />
          </div>
          <div className={`h-[22px] ${ROW}`}>
            <FieldLabel id="after" text="段后" k="F" />
            <Spinner id="after" value="0 行" />
            <Combo id="spacing" value="1.5 倍行距" />
            <Spinner id="at" value="" />
          </div>
          <div className="mt-px">
            <Check text="在相同样式的段落间不添加空格" k="C" />
            <Check text="如果定义了文档网格，则对齐到网格" k="W" checked />
          </div>

          <Heading className="mt-1">预览</Heading>
          <div className="ml-[9px] mt-0.5 h-[120px] whitespace-nowrap border border-[#5f5f5f] bg-white pl-6 pt-[7px] text-[7px] leading-[9px] text-[#a9a9a9]">
            <p>{'前一段落'.repeat(10)}</p>
            <p>{'前一段落'.repeat(10)}</p>
            <p>{'前一段落'.repeat(5)}</p>
            <p className="my-1 ml-3.5 text-black">盼望着，盼望着，东风来了，春天的脚步近了。</p>
            <p>{'下一段落'.repeat(10)}</p>
            <p>{'下一段落'.repeat(10)}</p>
            <p>{'下一段落'.repeat(10)}</p>
            <p>{'下一段落'.repeat(4)}</p>
          </div>
        </div>

        <div className="mt-2.5 flex gap-2.5 whitespace-nowrap">
          <button type="button" className={`mr-1.5 w-[89px] border-[#707070] ${BTN}`}><Key text="制表位" k="T" tail="..." /></button>
          <button type="button" className={`mr-1.5 w-[95px] border-[#707070] ${BTN}`}><Key text="设为默认值" k="D" /></button>
          <button type="button" className={`w-[74px] border-[#3c7fb1] ring-1 ring-inset ring-[#46c9f2] ${BTN}`}>确定</button>
          <button type="button" className={`w-[74px] border-[#707070] ${BTN}`}>取消</button>
        </div>
      </div>
    </div>
  </div>
);

const App: React.FC = () => (
  <div className={`relative flex h-screen flex-col overflow-hidden bg-[#fcfcfd] ${UI_FONT}`}>
    <TitleBar />
    <TabRow />
    <Ribbon />
    <Workspace />
    <StatusBar />
    <ParagraphDialog />
  </div>
);

export default App;
